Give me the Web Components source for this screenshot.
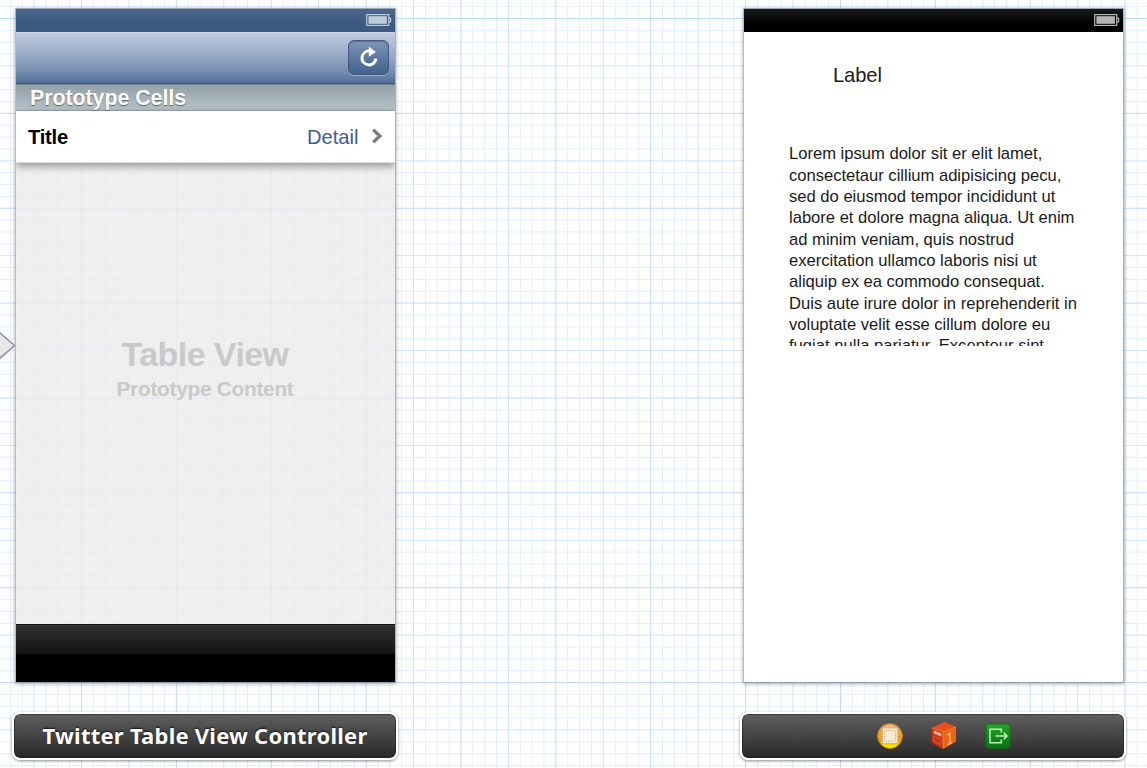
<!DOCTYPE html>
<html lang="en">
<head>
<meta charset="utf-8">
<title>Storyboard</title>
<style>
html,body{margin:0;width:1147px;height:768px;overflow:hidden;background:#fff;font-family:"Liberation Sans",Arial,sans-serif}
</style>
</head>
<body>
<story-board>
  <story-scene>
    <phone-screen>
      <status-bar></status-bar>
      <nav-bar></nav-bar>
      <section-header><fit-text width="156">Prototype Cells</fit-text></section-header>
      <table-cell><fit-text width="40">Title</fit-text><fit-text slot="detail" width="51.5">Detail</fit-text></table-cell>
      <table-placeholder><fit-text width="167">Table View</fit-text><fit-text slot="sub" width="177">Prototype Content</fit-text></table-placeholder>
      <tool-bar></tool-bar>
    </phone-screen>
    <scene-dock slot="dock"><fit-text width="325">Twitter Table View Controller</fit-text></scene-dock>
  </story-scene>
  <story-scene>
    <phone-screen solid>
      <status-bar dark></status-bar>
      <detail-view>
        <fit-text slot="label" width="48.8">Label</fit-text>
        <fit-text width="253.3">Lorem ipsum dolor sit er elit lamet,</fit-text>
        <fit-text width="272.3">consectetaur cillium adipisicing pecu,</fit-text>
        <fit-text width="266.3">sed do eiusmod tempor incididunt ut</fit-text>
        <fit-text width="285.4">labore et dolore magna aliqua. Ut enim</fit-text>
        <fit-text width="225">ad minim veniam, quis nostrud</fit-text>
        <fit-text width="247.7">exercitation ullamco laboris nisi ut</fit-text>
        <fit-text width="255.8">aliquip ex ea commodo consequat.</fit-text>
        <fit-text width="288">Duis aute irure dolor in reprehenderit in</fit-text>
        <fit-text width="261.2">voluptate velit esse cillum dolore eu</fit-text>
        <fit-text width="255">fugiat nulla pariatur. Excepteur sint</fit-text>
      </detail-view>
    </phone-screen>
    <scene-dock slot="dock"><scene-icons></scene-icons></scene-dock>
  </story-scene>
</story-board>
<script>
const define = (name, html, setup) => {
  const t = document.createElement('template');
  t.innerHTML = html;
  customElements.define(name, class extends HTMLElement {
    constructor() {
      super();
      this.attachShadow({mode: 'open'}).append(t.content.cloneNode(true));
    }
    connectedCallback() { if (setup) setup(this, this.shadowRoot); }
  });
};

define('story-board', `<style>
:host{display:block;position:relative;width:1147px;height:768px;overflow:hidden}
canvas-grid,entry-arrow{position:absolute;left:0}
canvas-grid{top:0}
entry-arrow{top:328px}
.scenes{position:relative;display:flex;gap:346px;padding:8px 0 0 12px;box-sizing:border-box}
</style><canvas-grid></canvas-grid><div class="scenes"><slot></slot></div><entry-arrow></entry-arrow>`);

/* Graph paper: minor lines, a medium line every 4, a strong line every 8 */
define('canvas-grid', `<style>:host{display:block}svg{display:block}</style><svg width="1147" height="768"></svg>`, (el, root) => {
  const step = 94.87 / 8;
  let out = '';
  for (const level of [0, 1, 2]) {
    const color = ['#e2efff', '#d0e4ff', '#bfdbff'][level];
    let d = '';
    for (let i = -8; i < 100; i++) {
      const l = i % 8 === 0 ? 2 : i % 4 === 0 ? 1 : 0;
      if (l !== level) continue;
      const x = (81.5 + i * step).toFixed(2), y = (18.5 + i * step).toFixed(2);
      d += 'M' + x + ' 0V768M0 ' + y + 'H1147';
    }
    out += '<path d="' + d + '" stroke="' + color + '" fill="none"/>';
  }
  root.querySelector('svg').innerHTML = out;
});

define('entry-arrow', `<style>:host{display:block}svg{display:block}</style>
<svg width="18" height="38"><path d="M-3 2L14.5 17.5L-3 33Z" fill="#aaa" opacity=".35" transform="translate(0 2)"/><path d="M-3 2.3L14.5 17.5L-3 32.7Z" fill="#e8e8e8" stroke="#949494" stroke-width="1.5"/></svg>`);

define('story-scene', `<style>
:host{display:flex;flex-direction:column;align-items:center;gap:29px;width:386px;flex:none;margin-right:-4px}
:host(:last-of-type){margin:0}
</style><slot></slot><slot name="dock"></slot>`);

define('phone-screen', `<style>
:host{display:flex;flex-direction:column;box-sizing:border-box;width:381px;height:675px;margin-left:1px;border:1px solid;border-color:#9da6b1 #aeb1b5 #8e9db0 #b8b8b8;box-shadow:0 1px 4px rgba(0,0,0,.32);overflow:hidden}
:host([solid]){background:#fff}
</style><slot></slot>`);

define('status-bar', `<style>
:host{display:flex;flex:none;height:23px;justify-content:flex-end;align-items:center;padding-right:3px;box-sizing:border-box;background:linear-gradient(#49678d,#3d5a80 60%,#3c5a82);color:#becbda}
:host([dark]){background:linear-gradient(#191919,#000 65%);color:#b5b5b5}
</style><svg width="26" height="13" fill="none" stroke="currentColor"><rect x=".7" y=".6" width="22" height="10.8" stroke-width="1.2"/><rect x="2.4" y="2.2" width="18.5" height="7.6" fill="currentColor" stroke="none"/><path d="M22.7 4.3H24.6V7.8H22.7" stroke-width="1.2"/></svg>`);

define('nav-bar', `<style>
:host{display:flex;flex:none;box-sizing:border-box;height:52px;justify-content:flex-end;padding:7px 6px 0 0;border-top:1px solid #d3dae3;border-bottom:1px solid #36547c;background:linear-gradient(#c0cde0,#92a5c3 50%,#7b92b5 72%,#536f98)}
.btn{box-sizing:border-box;width:41px;height:35px;border:1px solid #465b7a;border-radius:6px;background:linear-gradient(#8095b5,#5d7aa4 50%,#42628f);box-shadow:0 1px 0 rgba(230,238,250,.4),inset 0 1px 1px rgba(30,45,70,.35)}
svg{display:block}
</style><div class="btn"><svg width="39" height="33" viewBox="0 0 39 33"><path d="M20.2 9.6A7 7 0 1 0 26.3 17.2" fill="none" stroke="#34496a" stroke-width="3" transform="translate(.5 -.5)" opacity=".55"/><g transform="translate(.5 .5)"><path d="M20 9.4A7 7 0 1 0 26.4 17" fill="none" stroke="#fff" stroke-width="3"/><path d="M19.3 5.1L26.3 10.5L19.3 15.2Z" fill="#fff"/></g></svg></div>`);

define('section-header', `<style>
:host{display:flex;flex:none;box-sizing:border-box;height:27px;align-items:center;padding:1px 0 0 14px;border-top:1px solid #72838f;border-bottom:1px solid #98a4ac;background:linear-gradient(#93a0a9,#b7c2c8);font-weight:bold;font-size:21.4px;color:#fff;text-shadow:0 1px 1px #59656e}
</style><slot></slot>`);

define('table-cell', `<style>
:host{display:flex;flex:none;box-sizing:border-box;height:52px;align-items:center;padding:1px 12px 0;background:#fff;border-bottom:1px solid #ddd;box-shadow:0 3px 8px rgba(0,0,0,.4);position:relative;font-size:20.2px;font-weight:bold;color:#000}
.detail{margin-left:auto;margin-right:12.5px;font-weight:normal;color:#425c94}
</style><slot></slot><span class="detail"><slot name="detail"></slot></span><svg width="12" height="16" style="margin-top:-2px"><path d="M2.2 1.7L8.8 8L2.2 14.3" fill="none" stroke="#7e7e7e" stroke-width="3.4"/></svg>`);

define('table-placeholder', `<style>
:host{display:flex;flex:1;flex-direction:column;align-items:center;box-sizing:border-box;padding:170px 1px 0 0;background:rgba(235,235,235,.82);color:#c9c9c9;font-weight:bold;font-size:34px;line-height:42px}
.sub{font-size:20.8px;line-height:26px;padding-top:1px}
</style><slot></slot><span class="sub"><slot name="sub"></slot></span>`);

define('tool-bar', `<style>
:host{display:block;flex:none;box-sizing:border-box;height:58px;border-top:1px solid #111;background:linear-gradient(#393939 0 1px,#2e2e2e 1px,#151515 29px,#000 29px)}
</style>`);

define('detail-view', `<style>
:host{display:block;flex:1;color:#1a1a1a}
.label{padding:31px 0 0 89px;font-size:20.2px;line-height:24px}
.text{display:flex;flex-direction:column;margin:56.4px 0 0 45px;height:202.6px;overflow:hidden;font-size:16.6px;line-height:21.33px}
</style><div class="label"><slot name="label"></slot></div><div class="text"><slot></slot></div>`);

define('scene-dock', `<style>
:host{display:flex;box-sizing:border-box;width:386px;height:48px;align-items:center;justify-content:center;padding-bottom:2px;border:2px solid #fff;border-radius:8px;background:linear-gradient(rgba(76,76,76,.89),rgba(27,27,27,.94)) padding-box;box-shadow:0 1px 3px rgba(0,0,0,.45),inset 0 0 1px 1px rgba(30,30,30,.55);font:bold 22px "Noto Sans","Open Sans",sans-serif;color:#fff;text-shadow:0 -1px 2px #111}
</style><slot></slot>`);

define('scene-icons', `<style>
:host{display:flex;align-items:center;gap:27px;padding-left:21px;padding-top:1px}
svg{display:block}
</style>
<svg width="28" height="28" viewBox="0 0 28 28"><defs><linearGradient id="y" x2="0" y2="1"><stop stop-color="#d98654"/><stop offset=".35" stop-color="#f3a532"/><stop offset=".7" stop-color="#ee9d16"/><stop offset=".93" stop-color="#fff000"/></linearGradient></defs><circle cx="14" cy="14" r="12.4" fill="url(#y)" stroke="#bd881c" stroke-width="1"/><path d="M5 7Q14-2 23 7Z" fill="#f5c4a2" opacity=".75"/><rect x="6.3" y="6" width="15.5" height="15.5" fill="#f7e9d2" stroke="#d3ad79" stroke-width=".8"/><rect x="8.7" y="8.5" width="10.8" height="10.8" rx="1" fill="none" stroke="#a9977b" stroke-width=".8" stroke-dasharray="1 1"/></svg>
<svg width="26" height="28" viewBox="0 0 26 28"><path d="M13.5 0L25 5V19.5L12 27L1 20.5V6Z" fill="#dc3d0c"/><path d="M13.5 0L25 5L12 10L1 6Z" fill="#e8511a"/><path d="M12 10L25 5V19.5L12 27Z" fill="#ed6511"/><path d="M1 6L12 10V27L1 20.5Z" fill="#c93415"/><path d="M1 6L12 10L25 5M12 10V26" stroke="#ff8a43" stroke-width=".8" fill="none"/><path d="M2.8 8.4L10.2 11.3V14.4L2.8 11.4Z" fill="#f7b29b"/><path d="M3 14L10 17.5V23L3 19Z" fill="none" stroke="#df593b" stroke-width=".8"/><path d="M16 13L18.8 11.4V21.5M16.2 22.8L21 20.3" fill="none" stroke="#ffbd82" stroke-width="1.5"/></svg>
<svg width="28" height="28" viewBox="0 0 28 28"><defs><linearGradient id="g" x2="0" y2="1"><stop stop-color="#26a42b"/><stop offset="1" stop-color="#00720e"/></linearGradient></defs><rect x="2" y="2" width="24" height="24" rx="2.5" fill="url(#g)" stroke="#087612"/><path d="M17.3 10.5V7.2H6V20.8H17.3V17.5M11.5 14H22.5M19.7 10.8L23 14L19.7 17.2" fill="none" stroke="#c3efbb" stroke-width="1.5"/></svg>`);

/* Single line of text tracked to a given advance width */
define('fit-text', `<style>:host{display:block;white-space:nowrap;flex:none}span{display:inline-block}</style><span><slot></slot></span>`, (el, root) => {
  const span = root.querySelector('span');
  const want = +el.getAttribute('width'), n = el.textContent.length;
  const have = span.getBoundingClientRect().width;
  if (have > 0) span.style.letterSpacing = ((want - have) / n).toFixed(3) + 'px';
});
</script>
</body>
</html>
